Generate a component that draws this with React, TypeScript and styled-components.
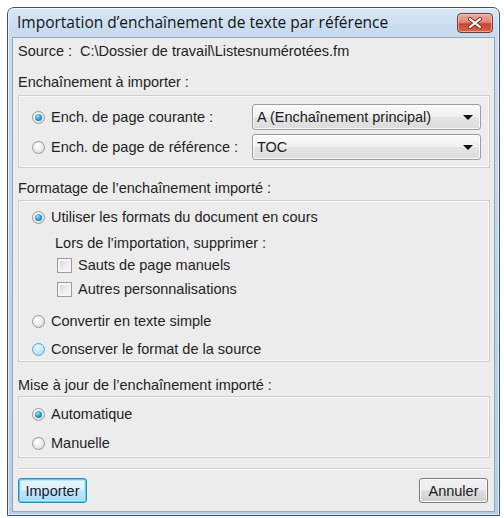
import React from 'react';
import styled, { createGlobalStyle, css } from 'styled-components';

const Global = createGlobalStyle`
  html, body { margin: 0; padding: 0; background: #ffffff; }
  body {
    font-family: "Liberation Sans", Arial, sans-serif;
    font-size: 14.5px;
    color: #1f1f1f;
  }
  * { box-sizing: border-box; }
`;

const Window = styled.div`
  margin: 7px 0 0 7px;
  width: 493px;
  height: 509px;
  border: 1px solid #3f5367;
  border-radius: 7px 7px 0 0;
  background: linear-gradient(180deg, #dbe8f5 0px, #c9dcef 20px, #bcd3ea 60%, #b5cde6 100%);
  box-shadow: inset 0 0 0 1px rgba(255, 255, 255, 0.6);
  display: flex;
  flex-direction: column;
  padding: 0 4px 3px 4px;
`;

const TitleBar = styled.div`
  height: 29px;
  display: flex;
  align-items: flex-start;
  justify-content: space-between;
`;

const TitleText = styled.div`
  font-family: "Open Sans", "Noto Sans", sans-serif;
  font-size: 15.5px;
  color: #141414;
  margin: 4px 0 0 5px;
  line-height: 21px;
`;

const CloseButton = styled.div`
  width: 36px;
  height: 20px;
  margin: 5px 2px 0 0;
  border: 1px solid #6e3b32;
  border-radius: 4px;
  background: linear-gradient(180deg, #e9a99c 0%, #dc8a79 45%, #c8452d 55%, #d8674b 100%);
  box-shadow: inset 0 0 0 1px rgba(255, 220, 210, 0.55);
  display: flex;
  align-items: center;
  justify-content: center;
`;

const Content = styled.div`
  flex: 1;
  background: #ececec;
  border: 1px solid #93a8bd;
  display: flex;
  flex-direction: column;
  padding: 3px 4px 0 5px;
`;

const Line = styled.div<{ $top?: number }>`
  height: 20px;
  line-height: 20px;
  margin-top: ${(p) => p.$top ?? 0}px;
  white-space: nowrap;
`;

const Group = styled.div<{ $top: number; $pt: number; $pb: number }>`
  margin-top: ${(p) => p.$top}px;
  border: 1px solid #cfcfcf;
  box-shadow: inset 0 0 0 1px #f7f7f7;
  display: flex;
  flex-direction: column;
  padding: ${(p) => p.$pt}px 0 ${(p) => p.$pb}px 0;
`;

const Row = styled.div<{ $top?: number; $indent?: number; $h?: number }>`
  display: flex;
  align-items: center;
  height: ${(p) => p.$h ?? 20}px;
  margin-top: ${(p) => p.$top ?? 0}px;
  padding-left: ${(p) => p.$indent ?? 13}px;
  white-space: nowrap;
`;

const RadioLabel = styled.span<{ $w?: number }>`
  margin-left: 6px;
  ${(p) => p.$w && css`width: ${p.$w}px;`}
`;

const Radio = styled.span<{ $checked?: boolean; $hover?: boolean }>`
  position: relative;
  width: 13px;
  height: 13px;
  flex: none;
  border-radius: 50%;
  border: 1px solid ${(p) => (p.$hover ? '#5aa9d6' : '#9a9a9a')};
  background: ${(p) =>
    p.$hover
      ? 'radial-gradient(circle at 40% 35%, #eaf7ff 0%, #bfe5f8 55%, #9fd2ee 100%)'
      : 'radial-gradient(circle at 40% 35%, #ffffff 0%, #ececec 50%, #cfcfcf 100%)'};
  ${(p) =>
    p.$checked &&
    css`
      &::after {
        content: '';
        position: absolute;
        left: 2px;
        top: 2px;
        width: 7px;
        height: 7px;
        border-radius: 50%;
        background: radial-gradient(circle at 40% 35%, #a5e6ff 0%, #2b9fd6 45%, #0f5f91 100%);
      }
    `}
`;

const Check = styled.span`
  width: 15px;
  height: 15px;
  flex: none;
  border: 1px solid #9b9b9b;
  background: linear-gradient(135deg, #d6d6d6 0%, #eeeeee 60%, #fafafa 100%);
  box-shadow: inset 0 0 0 2px #f4f4f4;
`;

const CheckLabel = styled.span`
  margin-left: 6px;
`;

const Select = styled.div`
  width: 229px;
  height: 26px;
  border: 1px solid #9d9d9d;
  border-radius: 3px;
  background: linear-gradient(180deg, #fafafa 0%, #f0f0f0 48%, #e4e4e4 52%, #dcdcdc 100%);
  box-shadow: inset 0 0 0 1px rgba(255, 255, 255, 0.8);
  display: flex;
  align-items: center;
  justify-content: space-between;
  padding: 0 7px 0 4px;
  color: #1b1b1b;
`;

const Arrow = styled.span`
  width: 0;
  height: 0;
  border-left: 5px solid transparent;
  border-right: 5px solid transparent;
  border-top: 5px solid #111;
`;

const Separator = styled.div`
  height: 2px;
  margin: 10px 0 0 0;
  border-top: 1px solid #d2d2d2;
  border-bottom: 1px solid #fbfbfb;
`;

const ButtonBar = styled.div`
  display: flex;
  justify-content: space-between;
  margin-top: 8px;
  padding-right: 2px;
`;

const Button = styled.div<{ $default?: boolean }>`
  height: 25px;
  min-width: 69px;
  padding: 0 6px;
  display: flex;
  align-items: center;
  justify-content: center;
  border-radius: 3px;
  border: 1px solid ${(p) => (p.$default ? '#3a87b5' : '#7a7a7a')};
  background: ${(p) =>
    p.$default
      ? 'linear-gradient(180deg, #eaf6fd 0%, #d9f0fc 48%, #bee6fd 52%, #a7d9f5 100%)'
      : 'linear-gradient(180deg, #f2f2f2 0%, #ebebeb 48%, #dddddd 52%, #cfcfcf 100%)'};
  box-shadow: ${(p) =>
    p.$default ? 'inset 0 0 0 1px #46d4fb, inset 0 0 0 2px #b4ecfc' : 'inset 0 0 0 1px #fbfbfb'};
  color: #1b1b1b;
`;

export default function App() {
  return (
    <>
      <Global />
      <Window>
        <TitleBar>
          <TitleText>Importation d’enchaînement de texte par référence</TitleText>
          <CloseButton>
            <svg width="16" height="12" viewBox="0 0 16 12">
              <path d="M3 2 L13 10 M13 2 L3 10" stroke="#7a3020" strokeWidth="4" strokeLinecap="round" />
              <path d="M3 2 L13 10 M13 2 L3 10" stroke="#ffffff" strokeWidth="2.2" strokeLinecap="round" />
            </svg>
          </CloseButton>
        </TitleBar>
        <Content>
          <Line>Source :&nbsp; C:\Dossier de travail\Listesnumérotées.fm</Line>
          <Line $top={11}>Enchaînement à importer :</Line>
          <Group $top={3} $pt={8} $pb={7}>
            <Row $h={26}>
              <Radio $checked />
              <RadioLabel $w={201}>Ench. de page courante :</RadioLabel>
              <Select>
                <span>A (Enchaînement principal)</span>
                <Arrow />
              </Select>
            </Row>
            <Row $h={26} $top={4}>
              <Radio />
              <RadioLabel $w={201}>Ench. de page de référence :</RadioLabel>
              <Select>
                <span>TOC</span>
                <Arrow />
              </Select>
            </Row>
          </Group>
          <Line $top={10}>Formatage de l’enchaînement importé :</Line>
          <Group $top={2} $pt={6} $pb={2}>
            <Row>
              <Radio $checked />
              <RadioLabel>Utiliser les formats du document en cours</RadioLabel>
            </Row>
            <Row $top={6} $indent={36}>Lors de l’importation, supprimer :</Row>
            <Row $top={2} $indent={38}>
              <Check />
              <CheckLabel>Sauts de page manuels</CheckLabel>
            </Row>
            <Row $top={4} $indent={38}>
              <Check />
              <CheckLabel>Autres personnalisations</CheckLabel>
            </Row>
            <Row $top={12}>
              <Radio />
              <RadioLabel>Convertir en texte simple</RadioLabel>
            </Row>
            <Row $top={8}>
              <Radio $hover />
              <RadioLabel>Conserver le format de la source</RadioLabel>
            </Row>
          </Group>
          <Line $top={13}>Mise à jour de l’enchaînement importé :</Line>
          <Group $top={1} $pt={7} $pb={4}>
            <Row>
              <Radio $checked />
              <RadioLabel>Automatique</RadioLabel>
            </Row>
            <Row $top={9}>
              <Radio />
              <RadioLabel>Manuelle</RadioLabel>
            </Row>
          </Group>
          <Separator />
          <ButtonBar>
            <Button $default>Importer</Button>
            <Button>Annuler</Button>
          </ButtonBar>
        </Content>
      </Window>
    </>
  );
}
